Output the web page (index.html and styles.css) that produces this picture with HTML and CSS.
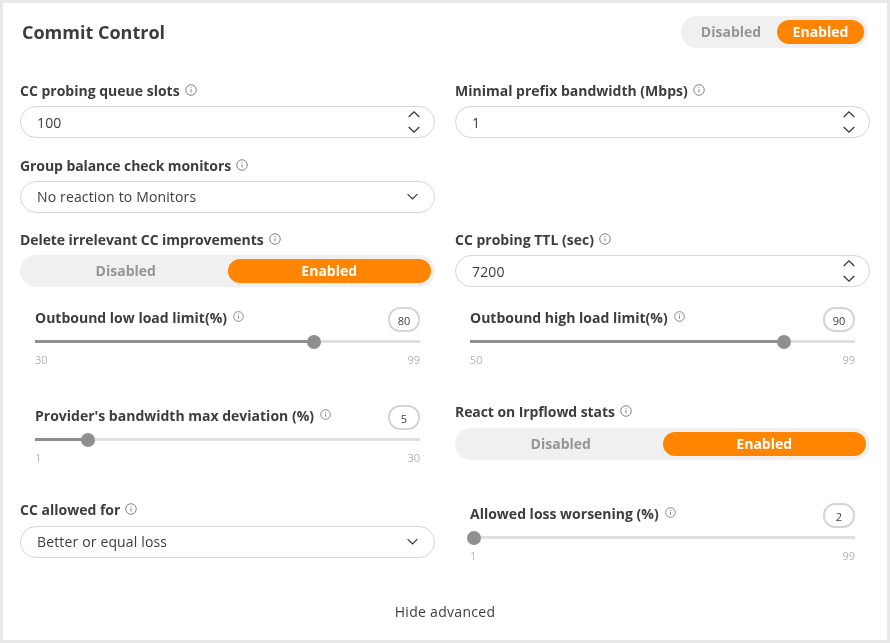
FILE: index.html
```html
<!DOCTYPE html>
<html lang="en">
<head>
<meta charset="utf-8">
<title>Commit Control</title>
<link rel="stylesheet" href="styles.css">
</head>
<body>
<svg class="sprite" width="0" height="0" aria-hidden="true">
  <symbol id="info" viewBox="0 0 13 13">
    <circle cx="6.5" cy="6.5" r="5.7" fill="none" stroke="#777" stroke-width="1"/>
    <path d="M6.5 5.6v3.6" stroke="#777" stroke-width="1" fill="none"/>
    <path d="M6.5 3.4v1.1" stroke="#777" stroke-width="1" fill="none"/>
  </symbol>
  <symbol id="up" viewBox="0 0 12 7">
    <path d="M.7 6 6 .9 11.3 6" fill="none" stroke="#333" stroke-width="1.2"/>
  </symbol>
  <symbol id="down" viewBox="0 0 12 7">
    <path d="M.7 1 6 6.1 11.3 1" fill="none" stroke="#333" stroke-width="1.2"/>
  </symbol>
</svg>
<main class="card">
  <header class="head">
    <h1 class="title">Commit Control</h1>
    <div class="toggle toggle-small">
      <span class="opt off">Disabled</span>
      <span class="opt on">Enabled</span>
    </div>
  </header>
  <div class="form">
    <div class="field a1">
      <div class="label">CC probing queue slots <svg class="info"><use href="#info"/></svg></div>
      <div class="control"><span>100</span><span class="spin"><svg class="chev"><use href="#up"/></svg><svg class="chev"><use href="#down"/></svg></span></div>
    </div>
    <div class="field b1">
      <div class="label">Minimal prefix bandwidth (Mbps) <svg class="info"><use href="#info"/></svg></div>
      <div class="control"><span>1</span><span class="spin"><svg class="chev"><use href="#up"/></svg><svg class="chev"><use href="#down"/></svg></span></div>
    </div>
    <div class="field a2">
      <div class="label label-tight">Group balance check monitors <svg class="info"><use href="#info"/></svg></div>
      <div class="control control-select"><span>No reaction to Monitors</span><svg class="chev"><use href="#down"/></svg></div>
    </div>
    <div class="field a3">
      <div class="label label-tight">Delete irrelevant CC improvements <svg class="info"><use href="#info"/></svg></div>
      <div class="toggle toggle-wide">
        <span class="opt off">Disabled</span>
        <span class="opt on">Enabled</span>
      </div>
    </div>
    <div class="field b3">
      <div class="label">CC probing TTL (sec) <svg class="info"><use href="#info"/></svg></div>
      <div class="control"><span>7200</span><span class="spin"><svg class="chev"><use href="#up"/></svg><svg class="chev"><use href="#down"/></svg></span></div>
    </div>
    <div class="slider a4">
      <div class="slider-head"><div class="label slider-label">Outbound low load limit(%) <svg class="info"><use href="#info"/></svg></div><span class="val">80</span></div>
      <div class="track"><div class="fill" style="width:72.46%"></div><div class="thumb" style="left:72.46%"></div></div>
      <div class="ticks"><span>30</span><span>99</span></div>
    </div>
    <div class="slider b4">
      <div class="slider-head"><div class="label slider-label">Outbound high load limit(%) <svg class="info"><use href="#info"/></svg></div><span class="val">90</span></div>
      <div class="track"><div class="fill" style="width:81.63%"></div><div class="thumb" style="left:81.63%"></div></div>
      <div class="ticks"><span>50</span><span>99</span></div>
    </div>
    <div class="slider a5">
      <div class="slider-head"><div class="label slider-label">Provider's bandwidth max deviation (%) <svg class="info"><use href="#info"/></svg></div><span class="val">5</span></div>
      <div class="track"><div class="fill" style="width:13.79%"></div><div class="thumb" style="left:13.79%"></div></div>
      <div class="ticks"><span>1</span><span>30</span></div>
    </div>
    <div class="field b5">
      <div class="label label-tall label-tight">React on Irpflowd stats <svg class="info"><use href="#info"/></svg></div>
      <div class="toggle toggle-wide">
        <span class="opt off">Disabled</span>
        <span class="opt on">Enabled</span>
      </div>
    </div>
    <div class="field a6">
      <div class="label label-tall">CC allowed for <svg class="info"><use href="#info"/></svg></div>
      <div class="control control-select"><span>Better or equal loss</span><svg class="chev"><use href="#down"/></svg></div>
    </div>
    <div class="slider b6">
      <div class="slider-head"><div class="label slider-label">Allowed loss worsening (%) <svg class="info"><use href="#info"/></svg></div><span class="val">2</span></div>
      <div class="track"><div class="fill" style="width:1.02%"></div><div class="thumb" style="left:1.02%"></div></div>
      <div class="ticks"><span>1</span><span>99</span></div>
    </div>
  </div>
  <div class="foot">Hide advanced</div>
</main>
</body>
</html>
```
FILE: styles.css
```css
* { box-sizing: border-box; }
html, body { margin: 0; padding: 0; }
body {
  width: 890px;
  height: 643px;
  padding: 3px;
  background: #e9e9e9;
  font-family: "Open Sans", "Liberation Sans", sans-serif;
  color: #3d3d3d;
  overflow: hidden;
}
.sprite { position: absolute; }
.card {
  width: 884px;
  height: 637px;
  background: #fff;
  padding: 13px 17px 0;
  will-change: transform;
}
.head {
  display: flex;
  justify-content: space-between;
  align-items: center;
  padding: 0 2px;
  height: 32px;
}
.title { margin: 0; font-size: 18px; font-weight: 700; line-height: 32px; }
.toggle {
  display: flex;
  height: 32px;
  padding: 4px;
  border-radius: 16px;
  background: #f0f0f0;
  font-size: 14px;
  font-weight: 700;
  line-height: 24px;
}
.toggle-small { width: 187px; }
.toggle-small .off { width: 92px; }
.toggle-small .on { width: 87px; }
.toggle-wide { width: 415px; }
.toggle-wide .opt { width: 50%; }
.opt { text-align: center; border-radius: 12px; }
.off { color: #959595; }
.on { background: #ff8500; color: #fff; }
.form {
  display: grid;
  grid-template-columns: 415px 415px;
  grid-template-rows: 75px 74px 74px 98px 98px 98px;
  column-gap: 20px;
  margin-top: 33px;
}
.a1 { grid-area: 1 / 1; }
.b1 { grid-area: 1 / 2; }
.a2 { grid-area: 2 / 1; }
.a3 { grid-area: 3 / 1; }
.b3 { grid-area: 3 / 2; }
.a4 { grid-area: 4 / 1; }
.b4 { grid-area: 4 / 2; }
.a5 { grid-area: 5 / 1; }
.b5 { grid-area: 5 / 2; }
.a6 { grid-area: 6 / 1; }
.b6 { grid-area: 6 / 2; }
.label {
  display: flex;
  align-items: center;
  gap: 5px;
  height: 25px;
  padding-bottom: 7px;
  font-size: 14px;
  font-weight: 700;
  white-space: nowrap;
}
.label-tall { height: 26px; padding-bottom: 8px; }
.label-tight { letter-spacing: -0.08px; }
.info { width: 12px; height: 12px; flex: none; }
.control {
  display: flex;
  justify-content: space-between;
  align-items: center;
  height: 32px;
  padding: 0 14px 0 16px;
  border: 1px solid #d6d6d6;
  border-radius: 16px;
  font-size: 14px;
  letter-spacing: 0.15px;
}
.control-select { padding: 0 16px 2px; }
.control-select .chev { width: 11px; height: 7px; }
.spin { display: flex; flex-direction: column; gap: 8px; }
.chev { display: block; width: 12px; height: 7px; flex: none; }
.slider { padding: 3px 15px 0; }
.slider-head { display: flex; justify-content: space-between; height: 25px; }
.slider-label { padding-bottom: 5px; gap: 6px; }
.slider-label .info { width: 11px; height: 11px; margin-top: -2px; }
.val {
  width: 32px;
  height: 25px;
  border: 2px solid #d5d5d5;
  border-radius: 12px;
  font-size: 11px;
  line-height: 23px;
  text-align: center;
}
.track {
  position: relative;
  height: 3px;
  margin-top: 8px;
  background: #e0e0e0;
}
.fill { height: 3px; background: #8f8f8f; }
.thumb {
  position: absolute;
  top: -5.5px;
  width: 14px;
  height: 14px;
  margin-left: -7px;
  border-radius: 50%;
  background: #8f8f8f;
}
.ticks {
  display: flex;
  justify-content: space-between;
  margin-top: 9px;
  font-size: 11px;
  line-height: 16px;
  color: #b5b5b5;
}
.foot {
  margin-top: 4px;
  text-align: center;
  font-size: 14px;
  line-height: 20px;
  letter-spacing: 0.3px;
}
```
